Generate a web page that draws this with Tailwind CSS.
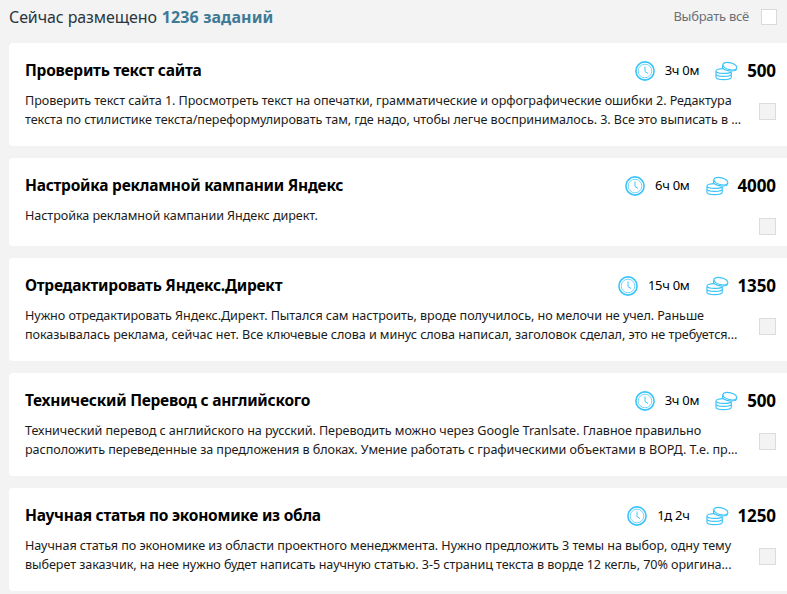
<!DOCTYPE html>
<html lang="ru">
<head>
    <meta charset="UTF-8">
    <title>Задания</title>
    <script src="https://cdn.jsdelivr.net/npm/@tailwindcss/browser@4"></script>
</head>
<body class="m-0 h-[594px] w-[787px] overflow-hidden bg-[#f3f3f3] font-['Noto_Sans',sans-serif] text-black">

    <!-- Header -->
    <div class="flex h-[43px] items-center pl-[9px] pr-[10px] pb-[9px]">
        <p class="text-[16px] tracking-[-0.1px] text-[#2a3540]">Сейчас размещено <span class="ml-[1px] font-bold text-[#3d7a96] tracking-[0.1px]">1236 заданий</span></p>
        <span class="ml-auto text-[13px] tracking-[-0.25px] text-[#6b7075]">Выбрать всё</span>
        <span class="ml-[12px] h-[16px] w-[16px] border border-[#d9d9d9] bg-white"></span>
    </div>

    <!-- Task 1 -->
    <div class="mb-[12px] ml-[9px] h-[103px] rounded-l-[4px] bg-white pl-[16px] pr-[11px] pt-[15px]">
        <div class="flex h-[25px] items-center">
            <h2 class="text-[15.5px] font-bold tracking-[-0.25px]">Проверить текст сайта</h2>
            <div class="ml-auto flex items-center">
                <svg class="h-[20px] w-[20px]" viewBox="0 0 20 20" fill="none" stroke="#3cc4f8"><circle cx="10" cy="10" r="9.1" stroke-width="1.6"/><circle cx="10" cy="10" r="6.8" stroke-width=".7"/><path d="M10 5.5V10.5L13 12.5" stroke-width="1"/></svg>
                <span class="ml-[10px] text-[13px] tracking-[-0.3px]">3ч 0м</span>
                <svg class="ml-[16px] h-[21px] w-[23px]" viewBox="0 0 24 21" fill="none" stroke="#3cc4f8" stroke-width="1.2"><ellipse cx="15.5" cy="6" rx="7.5" ry="3.6" transform="rotate(14 15.5 6)"/><path d="M8.2 4.5 7.8 7.5C8.5 9.5 15 12 21.5 10.5L22.8 8"/><path d="M9 8.5C4.5 8.5 1 9.5 1 11C1 12.5 5 13.5 9 13.5S15.5 13 17 12M1 11V17.5C1 19 5 20 9 20S17 19 17 17.5V11.5M1 14.2C1 15.7 5 16.7 9 16.7S17 15.7 17 14.2"/></svg>
                <span class="ml-[9px] text-[17px] font-bold tracking-[-0.1px]">500</span>
            </div>
        </div>
        <div class="mt-[8px] flex">
            <p class="whitespace-nowrap text-[12.6px] leading-[19px] tracking-[-0.07px] text-[#1b1b1b]">
                <span class="block">Проверить текст сайта 1. Просмотреть текст на опечатки, грамматические и орфографические ошибки 2. Редактура</span>
                <span class="block">текста по стилистике текста/переформулировать там, где надо, чтобы легче воспринималось. 3. Все это выписать в ...</span>
            </p>
            <span class="ml-auto mt-[12px] h-[17px] w-[17px] shrink-0 border border-[#dcdcdc] bg-[#f3f3f3]"></span>
        </div>
    </div>

    <!-- Task 2 -->
    <div class="mb-[12px] ml-[9px] h-[88px] rounded-l-[4px] bg-white pl-[16px] pr-[11px] pt-[15px]">
        <div class="flex h-[25px] items-center">
            <h2 class="text-[15.5px] font-bold tracking-[-0.25px]">Настройка рекламной кампании Яндекс</h2>
            <div class="ml-auto flex items-center">
                <svg class="h-[20px] w-[20px]" viewBox="0 0 20 20" fill="none" stroke="#3cc4f8"><circle cx="10" cy="10" r="9.1" stroke-width="1.6"/><circle cx="10" cy="10" r="6.8" stroke-width=".7"/><path d="M10 5.5V10.5L13 12.5" stroke-width="1"/></svg>
                <span class="ml-[10px] text-[13px] tracking-[-0.3px]">6ч 0м</span>
                <svg class="ml-[16px] h-[21px] w-[23px]" viewBox="0 0 24 21" fill="none" stroke="#3cc4f8" stroke-width="1.2"><ellipse cx="15.5" cy="6" rx="7.5" ry="3.6" transform="rotate(14 15.5 6)"/><path d="M8.2 4.5 7.8 7.5C8.5 9.5 15 12 21.5 10.5L22.8 8"/><path d="M9 8.5C4.5 8.5 1 9.5 1 11C1 12.5 5 13.5 9 13.5S15.5 13 17 12M1 11V17.5C1 19 5 20 9 20S17 19 17 17.5V11.5M1 14.2C1 15.7 5 16.7 9 16.7S17 15.7 17 14.2"/></svg>
                <span class="ml-[9px] text-[17px] font-bold tracking-[-0.1px]">4000</span>
            </div>
        </div>
        <div class="mt-[8px] flex">
            <p class="whitespace-nowrap text-[12.6px] leading-[19px] tracking-[-0.07px] text-[#1b1b1b]">Настройка рекламной кампании Яндекс директ.</p>
            <span class="ml-auto mt-[12px] h-[17px] w-[17px] shrink-0 border border-[#dcdcdc] bg-[#f3f3f3]"></span>
        </div>
    </div>

    <!-- Task 3 -->
    <div class="mb-[12px] ml-[9px] h-[103px] rounded-l-[4px] bg-white pl-[16px] pr-[11px] pt-[15px]">
        <div class="flex h-[25px] items-center">
            <h2 class="text-[15.5px] font-bold tracking-[-0.25px]">Отредактировать Яндекс.Директ</h2>
            <div class="ml-auto flex items-center">
                <svg class="h-[20px] w-[20px]" viewBox="0 0 20 20" fill="none" stroke="#3cc4f8"><circle cx="10" cy="10" r="9.1" stroke-width="1.6"/><circle cx="10" cy="10" r="6.8" stroke-width=".7"/><path d="M10 5.5V10.5L13 12.5" stroke-width="1"/></svg>
                <span class="ml-[10px] text-[13px] tracking-[-0.3px]">15ч 0м</span>
                <svg class="ml-[16px] h-[21px] w-[23px]" viewBox="0 0 24 21" fill="none" stroke="#3cc4f8" stroke-width="1.2"><ellipse cx="15.5" cy="6" rx="7.5" ry="3.6" transform="rotate(14 15.5 6)"/><path d="M8.2 4.5 7.8 7.5C8.5 9.5 15 12 21.5 10.5L22.8 8"/><path d="M9 8.5C4.5 8.5 1 9.5 1 11C1 12.5 5 13.5 9 13.5S15.5 13 17 12M1 11V17.5C1 19 5 20 9 20S17 19 17 17.5V11.5M1 14.2C1 15.7 5 16.7 9 16.7S17 15.7 17 14.2"/></svg>
                <span class="ml-[9px] text-[17px] font-bold tracking-[-0.1px]">1350</span>
            </div>
        </div>
        <div class="mt-[8px] flex">
            <p class="whitespace-nowrap text-[12.6px] leading-[19px] tracking-[-0.07px] text-[#1b1b1b]">
                <span class="block">Нужно отредактировать Яндекс.Директ. Пытался сам настроить, вроде получилось, но мелочи не учел. Раньше</span>
                <span class="block">показывалась реклама, сейчас нет. Все ключевые слова и минус слова написал, заголовок сделал, это не требуется...</span>
            </p>
            <span class="ml-auto mt-[12px] h-[17px] w-[17px] shrink-0 border border-[#dcdcdc] bg-[#f3f3f3]"></span>
        </div>
    </div>

    <!-- Task 4 -->
    <div class="mb-[12px] ml-[9px] h-[103px] rounded-l-[4px] bg-white pl-[16px] pr-[11px] pt-[15px]">
        <div class="flex h-[25px] items-center">
            <h2 class="text-[15.5px] font-bold tracking-[-0.25px]">Технический Перевод с английского</h2>
            <div class="ml-auto flex items-center">
                <svg class="h-[20px] w-[20px]" viewBox="0 0 20 20" fill="none" stroke="#3cc4f8"><circle cx="10" cy="10" r="9.1" stroke-width="1.6"/><circle cx="10" cy="10" r="6.8" stroke-width=".7"/><path d="M10 5.5V10.5L13 12.5" stroke-width="1"/></svg>
                <span class="ml-[10px] text-[13px] tracking-[-0.3px]">3ч 0м</span>
                <svg class="ml-[16px] h-[21px] w-[23px]" viewBox="0 0 24 21" fill="none" stroke="#3cc4f8" stroke-width="1.2"><ellipse cx="15.5" cy="6" rx="7.5" ry="3.6" transform="rotate(14 15.5 6)"/><path d="M8.2 4.5 7.8 7.5C8.5 9.5 15 12 21.5 10.5L22.8 8"/><path d="M9 8.5C4.5 8.5 1 9.5 1 11C1 12.5 5 13.5 9 13.5S15.5 13 17 12M1 11V17.5C1 19 5 20 9 20S17 19 17 17.5V11.5M1 14.2C1 15.7 5 16.7 9 16.7S17 15.7 17 14.2"/></svg>
                <span class="ml-[9px] text-[17px] font-bold tracking-[-0.1px]">500</span>
            </div>
        </div>
        <div class="mt-[8px] flex">
            <p class="whitespace-nowrap text-[12.6px] leading-[19px] tracking-[-0.07px] text-[#1b1b1b]">
                <span class="block">Технический перевод с английского на русский. Переводить можно через Google Tranlsate. Главное правильно</span>
                <span class="block">расположить переведенные за предложения в блоках. Умение работать с графическими объектами в ВОРД. Т.е. пр...</span>
            </p>
            <span class="ml-auto mt-[12px] h-[17px] w-[17px] shrink-0 border border-[#dcdcdc] bg-[#f3f3f3]"></span>
        </div>
    </div>

    <!-- Task 5 -->
    <div class="ml-[9px] h-[103px] rounded-l-[4px] bg-white pl-[16px] pr-[11px] pt-[15px]">
        <div class="flex h-[25px] items-center">
            <h2 class="text-[15.5px] font-bold tracking-[-0.25px]">Научная статья по экономике из обла</h2>
            <div class="ml-auto flex items-center">
                <svg class="h-[20px] w-[20px]" viewBox="0 0 20 20" fill="none" stroke="#3cc4f8"><circle cx="10" cy="10" r="9.1" stroke-width="1.6"/><circle cx="10" cy="10" r="6.8" stroke-width=".7"/><path d="M10 5.5V10.5L13 12.5" stroke-width="1"/></svg>
                <span class="ml-[10px] text-[13px] tracking-[-0.3px]">1д 2ч</span>
                <svg class="ml-[16px] h-[21px] w-[23px]" viewBox="0 0 24 21" fill="none" stroke="#3cc4f8" stroke-width="1.2"><ellipse cx="15.5" cy="6" rx="7.5" ry="3.6" transform="rotate(14 15.5 6)"/><path d="M8.2 4.5 7.8 7.5C8.5 9.5 15 12 21.5 10.5L22.8 8"/><path d="M9 8.5C4.5 8.5 1 9.5 1 11C1 12.5 5 13.5 9 13.5S15.5 13 17 12M1 11V17.5C1 19 5 20 9 20S17 19 17 17.5V11.5M1 14.2C1 15.7 5 16.7 9 16.7S17 15.7 17 14.2"/></svg>
                <span class="ml-[9px] text-[17px] font-bold tracking-[-0.1px]">1250</span>
            </div>
        </div>
        <div class="mt-[8px] flex">
            <p class="whitespace-nowrap text-[12.6px] leading-[19px] tracking-[-0.07px] text-[#1b1b1b]">
                <span class="block">Научная статья по экономике из области проектного менеджмента. Нужно предложить 3 темы на выбор, одну тему</span>
                <span class="block">выберет заказчик, на нее нужно будет написать научную статью. 3-5 страниц текста в ворде 12 кегль, 70% оригина...</span>
            </p>
            <span class="ml-auto mt-[12px] h-[17px] w-[17px] shrink-0 border border-[#dcdcdc] bg-[#f3f3f3]"></span>
        </div>
    </div>

</body>
</html>
